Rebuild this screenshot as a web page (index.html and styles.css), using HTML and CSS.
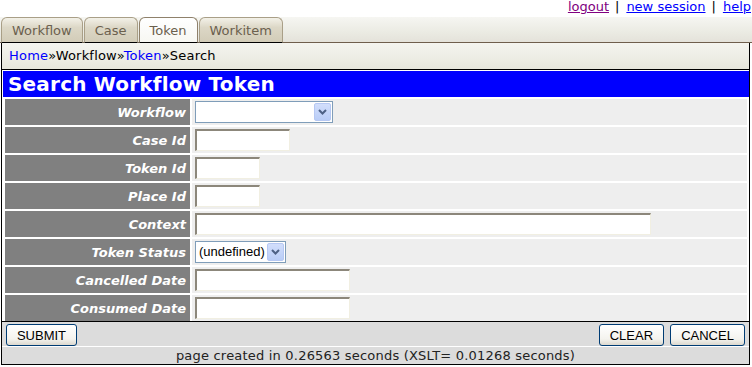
FILE: index.html
```html
<!DOCTYPE html>
<html lang="en">
<head>
    <meta charset="UTF-8">
    <title>Search Workflow Token</title>
    <link rel="stylesheet" href="styles.css">
</head>
<body>
    <div class="toplinks">
        <a href="#" class="visited">logout</a><span class="sep">|</span><a href="#">new session</a><span class="sep">|</span><a href="#">help</a>
    </div>
    <div class="tabbar">
        <a href="#" class="tab">Workflow</a>
        <a href="#" class="tab">Case</a>
        <a href="#" class="tab active">Token</a>
        <a href="#" class="tab">Workitem</a>
    </div>
    <div class="crumbs">
        <a href="#">Home</a>&raquo;Workflow&raquo;<a href="#">Token</a>&raquo;Search
    </div>
    <div class="frame">
        <div class="title">Search Workflow Token</div>
        <table class="form">
            <tr>
                <th>Workflow</th>
                <td>
                    <div class="select wide"><span></span><div class="arrow"><svg width="9" height="6" viewBox="0 0 9 6"><path d="M1 1 L4.5 4.5 L8 1" fill="none" stroke="#4d6185" stroke-width="2"/></svg></div></div>
                </td>
            </tr>
            <tr><th>Case Id</th><td><input type="text" class="w95"></td></tr>
            <tr><th>Token Id</th><td><input type="text" class="w65"></td></tr>
            <tr><th>Place Id</th><td><input type="text" class="w65"></td></tr>
            <tr><th>Context</th><td><input type="text" class="w456"></td></tr>
            <tr>
                <th>Token Status</th>
                <td>
                    <div class="select narrow"><span>(undefined)</span><div class="arrow"><svg width="9" height="6" viewBox="0 0 9 6"><path d="M1 1 L4.5 4.5 L8 1" fill="none" stroke="#4d6185" stroke-width="2"/></svg></div></div>
                </td>
            </tr>
            <tr><th>Cancelled Date</th><td><input type="text" class="w155"></td></tr>
            <tr><th>Consumed Date</th><td><input type="text" class="w155"></td></tr>
        </table>
        <div class="buttons">
            <button class="btn submit">SUBMIT</button>
            <div class="right">
                <button class="btn clear">CLEAR</button>
                <button class="btn cancel">CANCEL</button>
            </div>
        </div>
        <div class="footer">page created in 0.26563 seconds (XSLT= 0.01268 seconds)</div>
    </div>
</body>
</html>
```

FILE: styles.css
```css
body {
    margin: 0;
    background-color: #fff;
    font-family: "DejaVu Sans", Verdana, sans-serif;
    font-size: 13px;
    color: #000;
}
a {
    color: #0000ff;
}
.toplinks {
    height: 17px;
    line-height: 14px;
    text-align: right;
    padding-right: 1px;
}
.toplinks a.visited {
    color: #800080;
}
.toplinks .sep {
    margin: 0 7px 0 6px;
}
.tabbar {
    display: flex;
    align-items: flex-end;
    height: 25px;
    padding-left: 1px;
    background: linear-gradient(#f6f6f2, #ebebe3 60%, #e4e2da);
    border-bottom: 1px solid #6f5e4c;
}
.tab {
    height: 24px;
    line-height: 25px;
    padding: 0 10px;
    margin-right: 1px;
    margin-bottom: -1px;
    border: 1px solid #a99f87;
    border-bottom: 1px solid #000;
    border-radius: 6px 6px 0 0;
    background: linear-gradient(#f3f1e8, #dcd7c6 40%, #d2ccb8);
    color: #6b604e;
    text-decoration: none;
}
.tab.active {
    background: linear-gradient(#ffffff, #f7f7f2);
    border-color: #8f816b;
    border-bottom-color: #000;
}
.crumbs {
    height: 26px;
    line-height: 25px;
    margin: 0 2px 0 1px;
    padding-left: 7px;
    border-left: 1px solid #000;
    border-right: 1px solid #000;
    border-bottom: 1px solid #000;
    background: linear-gradient(#f4f4ef, #eeeee6 50%, #e6e6dc);
    letter-spacing: 0.2px;
}
.crumbs a {
    text-decoration: none;
}
.frame {
    margin: 0 2px 0 1px;
    padding-top: 1px;
    border-left: 1px solid #000;
    border-right: 1px solid #000;
    border-bottom: 1px solid #000;
    background-color: #fff;
}
.title {
    height: 26px;
    line-height: 26px;
    margin-left: 1px;
    padding-left: 5px;
    background-color: #0000ff;
    color: #fff;
    font-size: 20px;
    font-weight: bold;
    letter-spacing: 0.2px;
}
.form {
    width: 746px;
    margin: 0 0 -2px 1px;
    border-spacing: 2px;
}
.form th {
    width: 181px;
    height: 26px;
    padding: 0 4px 0 0;
    background-color: #808080;
    color: #fff;
    font-style: italic;
    font-weight: bold;
    text-align: right;
}
.form td {
    height: 26px;
    padding: 0 0 0 3px;
    background-color: #eeeeee;
}
.form input {
    display: block;
    height: 22px;
    box-sizing: border-box;
    border-top: 2px solid #8c877b;
    border-left: 2px solid #8c877b;
    border-right: 1px solid #f1efe2;
    border-bottom: 1px solid #f1efe2;
    background: #fff;
    margin: 0;
}
.w65 { width: 65px; }
.w95 { width: 95px; }
.w155 { width: 155px; }
.w456 { width: 456px; }
.select {
    display: flex;
    height: 22px;
    box-sizing: border-box;
    border: 1px solid #7f9db9;
    background: #fff;
    font-family: "Liberation Sans", Arial, sans-serif;
    font-size: 13px;
}
.select span {
    flex: 1;
    line-height: 20px;
    padding-left: 3px;
}
.select .arrow {
    width: 17px;
    margin: 1px;
    border-radius: 2px;
    background: linear-gradient(#d2defb, #b9cdf7);
    border: 1px solid #b6c8f3;
    box-sizing: border-box;
    display: flex;
    align-items: center;
    justify-content: center;
}
.select.wide { width: 138px; }
.select.narrow { width: 91px; }
.buttons {
    display: flex;
    justify-content: space-between;
    height: 25px;
    padding: 2px 4px 0 4px;
    box-sizing: border-box;
    border-top: 1px solid #000;
    background-color: #dcdcdc;
}
.btn {
    height: 22px;
    padding: 0;
    border: 1px solid #003c74;
    border-radius: 3px;
    background: linear-gradient(#ffffff, #f4f3ee 70%, #dcd8cf);
    font-family: "Liberation Sans", Arial, sans-serif;
    font-size: 13px;
    color: #000;
}
.submit { width: 71px; }
.clear { width: 65px; }
.cancel { width: 75px; margin-left: 2px; }
.footer {
    height: 17px;
    line-height: 17px;
    margin-top: 1px;
    text-align: center;
    background-color: #dcdcdc;
    font-size: 13px;
    letter-spacing: 0.2px;
    color: #222;
}
```
